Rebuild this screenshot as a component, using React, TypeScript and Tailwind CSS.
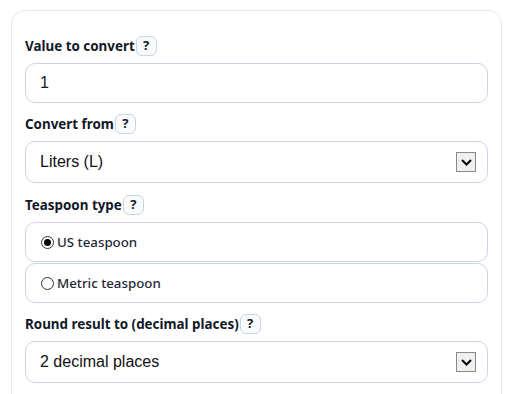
import { useState } from 'react';

const Help = () => (
  <span className="ml-px inline-flex h-5 w-[21px] items-center justify-center rounded-md border border-[#cbd5e1] bg-[#f8fafc] text-[13px] font-bold text-[#111827]">
    ?
  </span>
);

const Label = ({ text }: { text: string }) => (
  <div className="flex h-5 items-center text-[13.4px] font-bold text-[#111827]">
    <span>{text}</span>
    <Help />
  </div>
);

const Arrow = () => (
  <span className="flex h-5 w-5 items-center justify-center border border-[#8a8a8a] bg-[#f0f0f0]">
    <svg width="11" height="7" viewBox="0 0 11 7">
      <path d="M1 1l4.5 4.5L10 1" fill="none" stroke="#000" strokeWidth="2" />
    </svg>
  </span>
);

const Select = ({ value }: { value: string }) => (
  <div className="mt-[7px] flex h-[42px] items-center justify-between rounded-[10px] border border-[#cbd5e1] bg-white pl-[14px] pr-[11px] text-[16px] text-[#111] [font-family:'Liberation_Sans',Arial,sans-serif]">
    <span>{value}</span>
    <Arrow />
  </div>
);

const Radio = ({ checked, label, onClick, top }: { checked: boolean; label: string; onClick: () => void; top?: boolean }) => (
  <div
    onClick={onClick}
    className={`flex h-10 cursor-pointer items-center gap-[3px] rounded-[10px] border border-[#cbd5e1] bg-white pl-[15px] pt-px text-[13.3px] font-medium text-[#1f2937] ${top ? '' : 'mt-px'}`}
  >
    <span className="flex h-[13px] w-[13px] items-center justify-center rounded-full border border-[#333] bg-white">
      {checked && <span className="h-[7px] w-[7px] rounded-full bg-black" />}
    </span>
    <span>{label}</span>
  </div>
);

const App = () => {
  const [value, setValue] = useState('1');
  const [type, setType] = useState('us');

  return (
    <div className="h-[394px] overflow-hidden bg-white pl-[11px] pr-[11px] pt-[10px] [font-family:'Noto_Sans','Open_Sans',sans-serif]">
      <div className="h-[420px] rounded-t-[14px] border border-[#e5e7eb] px-[13px] pt-[25px]">
        <Label text="Value to convert" />
        <input
          value={value}
          onChange={(e) => setValue(e.target.value)}
          className="mt-[7px] block h-10 w-full rounded-[10px] border border-[#cbd5e1] bg-white px-[14px] text-[16px] text-[#0f172a] outline-none [font-family:'Liberation_Sans',Arial,sans-serif]"
        />

        <div className="mt-[11px]">
          <Label text="Convert from" />
          <Select value="Liters (L)" />
        </div>

        <div className="mt-[12px]">
          <Label text="Teaspoon type" />
          <div className="mt-[7px]">
            <Radio top checked={type === 'us'} label="US teaspoon" onClick={() => setType('us')} />
            <Radio checked={type === 'metric'} label="Metric teaspoon" onClick={() => setType('metric')} />
          </div>
        </div>

        <div className="mt-[11px]">
          <Label text="Round result to (decimal places)" />
          <Select value="2 decimal places" />
        </div>
      </div>
    </div>
  );
};

export default App;
